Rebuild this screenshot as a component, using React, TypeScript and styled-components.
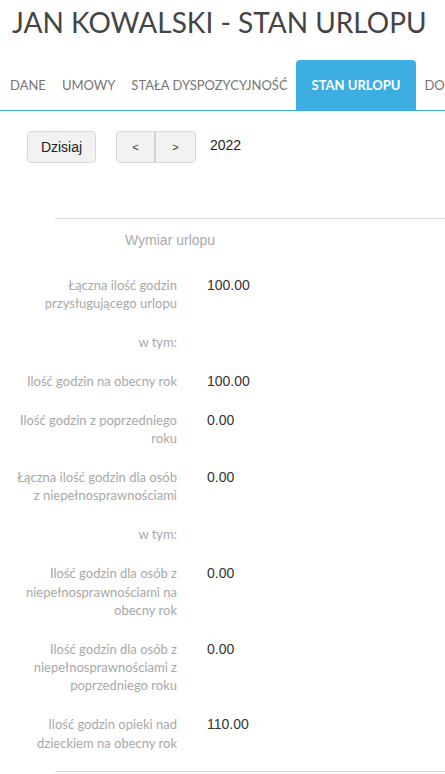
import React from "react";
import styled, { createGlobalStyle } from "styled-components";

const GlobalStyle = createGlobalStyle`
  html, body { margin: 0; padding: 0; background: #fff; }
  body { font-family: "Liberation Sans", Arial, sans-serif; overflow: hidden; }
  * { box-sizing: border-box; }
`;

const Page = styled.div`
  width: 445px;
  overflow: hidden;
`;

const Title = styled.h1`
  margin: 0;
  padding: 4px 0 0 12px;
  height: 60px;
  font-family: Lato, sans-serif;
  font-weight: 400;
  font-size: 28px;
  line-height: 36px;
  color: #444;
  white-space: nowrap;
`;

const TabBar = styled.div`
  display: flex;
  align-items: stretch;
  height: 51px;
  padding-left: 2px;
  border-bottom: 1px solid #3daee1;
  white-space: nowrap;
  overflow: hidden;
`;

const Tab = styled.div<{ $active?: boolean }>`
  display: flex;
  align-items: center;
  flex: none;
  padding: 0 ${(p) => (p.$active ? "16px" : "8px")};
  font-family: Lato, sans-serif;
  font-size: 13px;
  font-weight: ${(p) => (p.$active ? 700 : 400)};
  text-transform: uppercase;
  color: ${(p) => (p.$active ? "#fff" : "#777")};
  background: ${(p) => (p.$active ? "#3daee1" : "transparent")};
  border-radius: 4px 4px 0 0;
`;

const Toolbar = styled.div`
  display: flex;
  align-items: center;
  padding: 20px 0 0 27px;
  height: 52px;
`;

const Button = styled.button`
  height: 32px;
  padding: 0;
  border: 1px solid #d9d9d9;
  background: #f2f2f2;
  border-radius: 4px;
  font-family: "Liberation Sans", Arial, sans-serif;
  font-size: 14px;
  color: #222;
`;

const TodayButton = styled(Button)`
  width: 69px;
`;

const Group = styled.div`
  display: flex;
  margin-left: 20px;
`;

const NavButton = styled(Button)<{ $side: "left" | "right" }>`
  width: 40px;
  font-size: 11px;
  color: #333;
  border-radius: ${(p) => (p.$side === "left" ? "4px 0 0 4px" : "0 4px 4px 0")};
  border-left-width: ${(p) => (p.$side === "right" ? "0" : "1px")};
  border-left-style: solid;
  ${(p) => (p.$side === "left" ? "border-right: 2px solid #d2d2d2;" : "")}
`;

const Year = styled.span`
  margin-left: 14px;
  margin-top: -4px;
  font-size: 14px;
  color: #222;
`;

const Section = styled.div`
  margin: 55px 0 0 55px;
  border-top: 1px solid #dedede;
`;

const Legend = styled.div`
  padding: 11px 0 0 70px;
  height: 57px;
  font-size: 14px;
  line-height: 20px;
  color: #aaa;
`;

const Form = styled.div`
  display: grid;
  grid-template-columns: 170px 1fr;
  column-gap: 30px;
  row-gap: 20.6px;
  padding-left: 7px;
  padding-bottom: 19px;
`;

const Label = styled.div`
  font-family: Lato, sans-serif;
  font-size: 13px;
  font-weight: 400;
  line-height: 18.3px;
  color: #a8a8a8;
  text-align: right;
`;

const Value = styled.div`
  font-size: 14px;
  line-height: 18.3px;
  color: #333;
`;

const BottomRule = styled.div`
  margin-left: 55px;
  border-top: 1px solid #d8d8d8;
`;

const rows: [string, string][] = [
  ["Łączna ilość godzin przysługującego urlopu", "100.00"],
  ["w tym:", ""],
  ["Ilość godzin na obecny rok", "100.00"],
  ["Ilość godzin z poprzedniego roku", "0.00"],
  ["Łączna ilość godzin dla osób z\u00A0niepełnosprawnościami", "0.00"],
  ["w tym:", ""],
  ["Ilość godzin dla osób z niepełnosprawnościami na obecny rok", "0.00"],
  ["Ilość godzin dla osób z niepełnosprawnościami z poprzedniego roku", "0.00"],
  ["Ilość godzin opieki nad dzieckiem na obecny rok", "110.00"],
];

export default function App() {
  return (
    <Page>
      <GlobalStyle />
      <Title>JAN KOWALSKI - STAN URLOPU</Title>
      <TabBar>
        <Tab>Dane</Tab>
        <Tab>Umowy</Tab>
        <Tab>Stała dyspozycyjność</Tab>
        <Tab $active>Stan urlopu</Tab>
        <Tab>Dokumenty</Tab>
      </TabBar>
      <Toolbar>
        <TodayButton>Dzisiaj</TodayButton>
        <Group>
          <NavButton $side="left">&lt;</NavButton>
          <NavButton $side="right">&gt;</NavButton>
        </Group>
        <Year>2022</Year>
      </Toolbar>
      <Section>
        <Legend>Wymiar urlopu</Legend>
      </Section>
      <Form>
        {rows.map(([l, v], i) => (
          <React.Fragment key={i}>
            <Label>{l}</Label>
            <Value>{v}</Value>
          </React.Fragment>
        ))}
      </Form>
      <BottomRule />
    </Page>
  );
}
